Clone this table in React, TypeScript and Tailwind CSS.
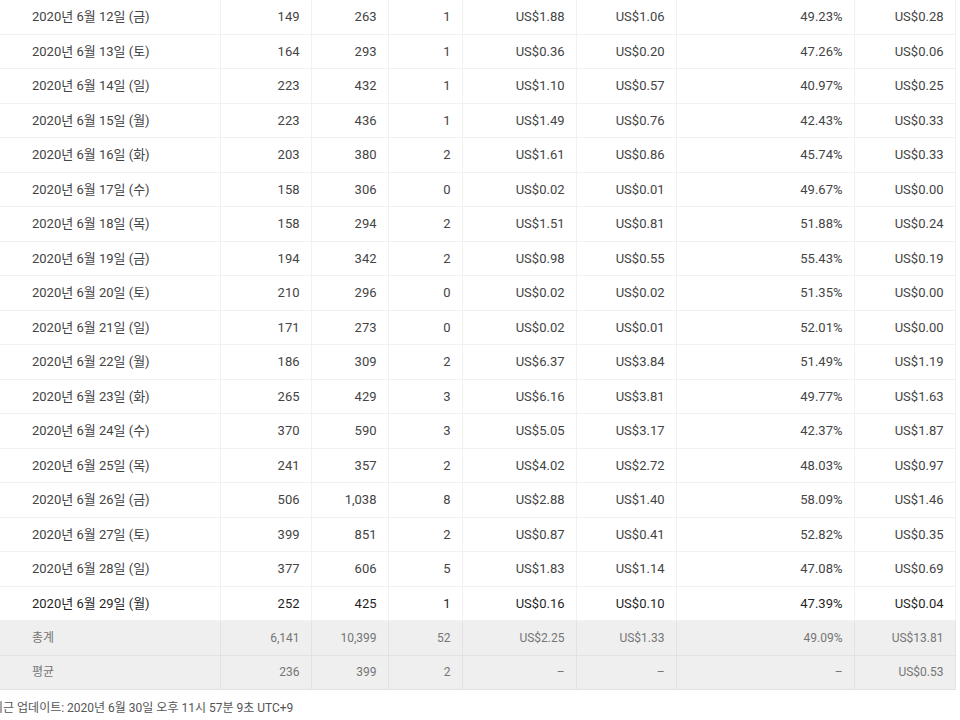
import React from 'react'

type Row = [string, string, string, string, string, string, string, string]

const ROWS: Row[] = [
  ['2020년 6월 12일 (금)', '149', '263', '1', 'US$1.88', 'US$1.06', '49.23%', 'US$0.28'],
  ['2020년 6월 13일 (토)', '164', '293', '1', 'US$0.36', 'US$0.20', '47.26%', 'US$0.06'],
  ['2020년 6월 14일 (일)', '223', '432', '1', 'US$1.10', 'US$0.57', '40.97%', 'US$0.25'],
  ['2020년 6월 15일 (월)', '223', '436', '1', 'US$1.49', 'US$0.76', '42.43%', 'US$0.33'],
  ['2020년 6월 16일 (화)', '203', '380', '2', 'US$1.61', 'US$0.86', '45.74%', 'US$0.33'],
  ['2020년 6월 17일 (수)', '158', '306', '0', 'US$0.02', 'US$0.01', '49.67%', 'US$0.00'],
  ['2020년 6월 18일 (목)', '158', '294', '2', 'US$1.51', 'US$0.81', '51.88%', 'US$0.24'],
  ['2020년 6월 19일 (금)', '194', '342', '2', 'US$0.98', 'US$0.55', '55.43%', 'US$0.19'],
  ['2020년 6월 20일 (토)', '210', '296', '0', 'US$0.02', 'US$0.02', '51.35%', 'US$0.00'],
  ['2020년 6월 21일 (일)', '171', '273', '0', 'US$0.02', 'US$0.01', '52.01%', 'US$0.00'],
  ['2020년 6월 22일 (월)', '186', '309', '2', 'US$6.37', 'US$3.84', '51.49%', 'US$1.19'],
  ['2020년 6월 23일 (화)', '265', '429', '3', 'US$6.16', 'US$3.81', '49.77%', 'US$1.63'],
  ['2020년 6월 24일 (수)', '370', '590', '3', 'US$5.05', 'US$3.17', '42.37%', 'US$1.87'],
  ['2020년 6월 25일 (목)', '241', '357', '2', 'US$4.02', 'US$2.72', '48.03%', 'US$0.97'],
  ['2020년 6월 26일 (금)', '506', '1,038', '8', 'US$2.88', 'US$1.40', '58.09%', 'US$1.46'],
  ['2020년 6월 27일 (토)', '399', '851', '2', 'US$0.87', 'US$0.41', '52.82%', 'US$0.35'],
  ['2020년 6월 28일 (일)', '377', '606', '5', 'US$1.83', 'US$1.14', '47.08%', 'US$0.69'],
  ['2020년 6월 29일 (월)', '252', '425', '1', 'US$0.16', 'US$0.10', '47.39%', 'US$0.04'],
]

const SUMMARY: Row[] = [
  ['총계', '6,141', '10,399', '52', 'US$2.25', 'US$1.33', '49.09%', 'US$13.81'],
  ['평균', '236', '399', '2', '–', '–', '–', 'US$0.53'],
]

const WIDTHS = ['w-[220px]', 'w-[91px]', 'w-[77px]', 'w-[74px]', 'w-[114px]', 'w-[100px]', 'w-[178px]', 'w-[101px]']

export default function App() {
  return (
    <div className="min-h-[720px] w-[960px] overflow-hidden bg-white font-['Roboto','Noto_Sans_CJK_KR',sans-serif]">
      <table className="-mt-px w-[955px] table-fixed border-collapse">
        <colgroup>
          {WIDTHS.map((w, i) => (
            <col key={i} className={w} />
          ))}
        </colgroup>
        <tbody>
          {ROWS.map((row, r) => (
            <tr
              key={r}
              className={
                r === ROWS.length - 1
                  ? 'h-[34.5px] text-[13px] text-[#1f1f1f]'
                  : 'h-[34.5px] text-[13px] text-[#444]'
              }
            >
              {row.map((cell, c) => (
                <td
                  key={c}
                  className={
                    c === 0
                      ? 'border border-[#f1f1f1] border-l-0 pl-8 text-left whitespace-nowrap'
                      : 'border border-[#f1f1f1] pr-[11px] text-right whitespace-nowrap'
                  }
                >
                  {cell}
                </td>
              ))}
            </tr>
          ))}
          {SUMMARY.map((row, r) => (
            <tr key={r} className="h-[34.5px] bg-[#efefef] text-[12px] text-[#757575]">
              {row.map((cell, c) => (
                <td
                  key={c}
                  className={
                    c === 0
                      ? 'border border-[#e2e2e2] border-l-0 pl-8 text-left whitespace-nowrap'
                      : 'border border-[#e2e2e2] pr-[11px] text-right whitespace-nowrap'
                  }
                >
                  {cell}
                </td>
              ))}
            </tr>
          ))}
        </tbody>
      </table>
      <p className="-ml-2 mt-[9px] text-[12px] text-[#555]">
        최근 업데이트: 2020년 6월 30일 오후 11시 57분 9초 UTC+9
      </p>
    </div>
  )
}
